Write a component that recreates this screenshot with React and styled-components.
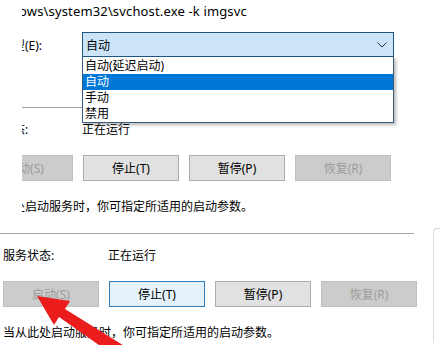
import React from "react";
import styled, { createGlobalStyle } from "styled-components";

const GlobalStyle = createGlobalStyle`
  body {
    margin: 0;
    background: #fff;
  }
`;

const Page = styled.div`
  position: relative;
  width: 440px;
  height: 345px;
  overflow: hidden;
  background: #fff;
  color: #000;
  font-family: "Noto Sans", "Noto Sans CJK SC", sans-serif;
  font-size: 12px;
`;

const Clip = styled.div`
  margin-left: 22px;
  width: 418px;
  height: 213px;
  overflow: hidden;
`;

const Shifted = styled.div`
  position: relative;
  margin-left: -45px;
`;

const PathRow = styled.div`
  margin-left: -7px;
  height: 22px;
  line-height: 22px;
  font-size: 13px;
  letter-spacing: 0.15px;
  white-space: nowrap;
`;

const TypeRow = styled.div`
  display: grid;
  grid-template-columns: 105px 312px;
  align-items: center;
  margin-top: 10px;
  height: 25px;
`;

const Combo = styled.div`
  box-sizing: border-box;
  height: 25px;
  display: flex;
  align-items: center;
  justify-content: space-between;
  padding: 0 6px 0 3px;
  background: #cce4f7;
  border: 1px solid #1f5783;
`;

const DropList = styled.ul`
  position: absolute;
  top: 57px;
  left: 105px;
  box-sizing: border-box;
  width: 312px;
  margin: 0;
  padding: 1px 0 0;
  list-style: none;
  background: #fff;
  border: 1px solid #3d5c79;
  border-top: none;
  box-shadow: 2px 2px 3px rgba(0, 0, 0, 0.28);
  z-index: 2;
`;

const DropItem = styled.li`
  height: 16px;
  line-height: 16px;
  padding-left: 2px;
  background: ${(p) => (p.selected ? "#0078d7" : "transparent")};
  color: ${(p) => (p.selected ? "#fff" : "#000")};
`;

const Gap = styled.div`
  height: ${(p) => p.size}px;
`;

const Separator = styled.div`
  margin-left: ${(p) => p.offset}px;
  width: 414px;
  height: 1px;
  background: #a7a7a7;
`;

const StatusRow = styled.div`
  display: grid;
  grid-template-columns: 105px auto;
  margin-top: 10px;
  height: 24px;
  line-height: 24px;
`;

const ButtonRow = styled.div`
  display: grid;
  grid-template-columns: repeat(4, 96px);
  gap: 10px;
  margin-top: 13px;
`;

const Button = styled.div`
  box-sizing: border-box;
  height: 26px;
  display: flex;
  align-items: center;
  justify-content: center;
  border: 1px solid
    ${(p) => (p.disabled ? "#bfbfbf" : p.focused ? "#2f7fc0" : "#adadad")};
  background: ${(p) => (p.disabled ? "#cccccc" : p.focused ? "#e5f1fb" : "#e1e1e1")};
  color: ${(p) => (p.disabled ? "#9c9c9c" : "#000")};
`;

const Hint = styled.div`
  margin-top: 16px;
  height: 20px;
  line-height: 20px;
  white-space: nowrap;
`;

const Bottom = styled.div`
  display: flex;
  margin-top: 20px;
`;

const BottomPanel = styled.div`
  width: 430px;
  padding-left: 3px;
`;

const Frame = styled.div`
  flex: 1;
  margin-top: -5px;
  border-left: 1px solid #dcdcdc;
  border-top: 1px solid #dcdcdc;
  border-top-left-radius: 4px;
`;

const ArrowLayer = styled.svg`
  position: absolute;
  left: 0;
  top: 0;
  pointer-events: none;
`;

const ServicePanel = ({ focusStop }) => (
  <div>
    <Separator offset={-3} />
    <StatusRow>
      <span>服务状态:</span>
      <span>正在运行</span>
    </StatusRow>
    <ButtonRow>
      <Button disabled>启动(S)</Button>
      <Button focused={focusStop}>停止(T)</Button>
      <Button>暂停(P)</Button>
      <Button disabled>恢复(R)</Button>
    </ButtonRow>
    <Hint>当从此处启动服务时，你可指定所适用的启动参数。</Hint>
  </div>
);

const options = ["自动(延迟启动)", "自动", "手动", "禁用"];

export default function App() {
  return (
    <>
      <GlobalStyle />
      <Page>
        <Clip>
          <Shifted>
            <PathRow>C:\Windows\system32\svchost.exe -k imgsvc</PathRow>
            <TypeRow>
              <span>启动类型(E):</span>
              <Combo>
                <span>自动</span>
                <svg width="10" height="6" viewBox="0 0 10 6">
                  <polyline points="0.5,0.5 5,5 9.5,0.5" fill="none" stroke="#333" strokeWidth="1" />
                </svg>
              </Combo>
            </TypeRow>
            <DropList>
              {options.map((o) => (
                <DropItem key={o} selected={o === "自动"}>
                  {o}
                </DropItem>
              ))}
            </DropList>
            <Gap size={50} />
            <ServicePanel />
          </Shifted>
        </Clip>
        <Bottom>
          <BottomPanel>
            <ServicePanel focusStop />
          </BottomPanel>
          <Frame />
        </Bottom>
        <ArrowLayer width="440" height="345" viewBox="0 0 440 345">
          <polygon
            points="37,296 70,301 65,309 134,352 126,364 59,317 54,325"
            fill="#ea1c1c"
          />
        </ArrowLayer>
      </Page>
    </>
  );
}
